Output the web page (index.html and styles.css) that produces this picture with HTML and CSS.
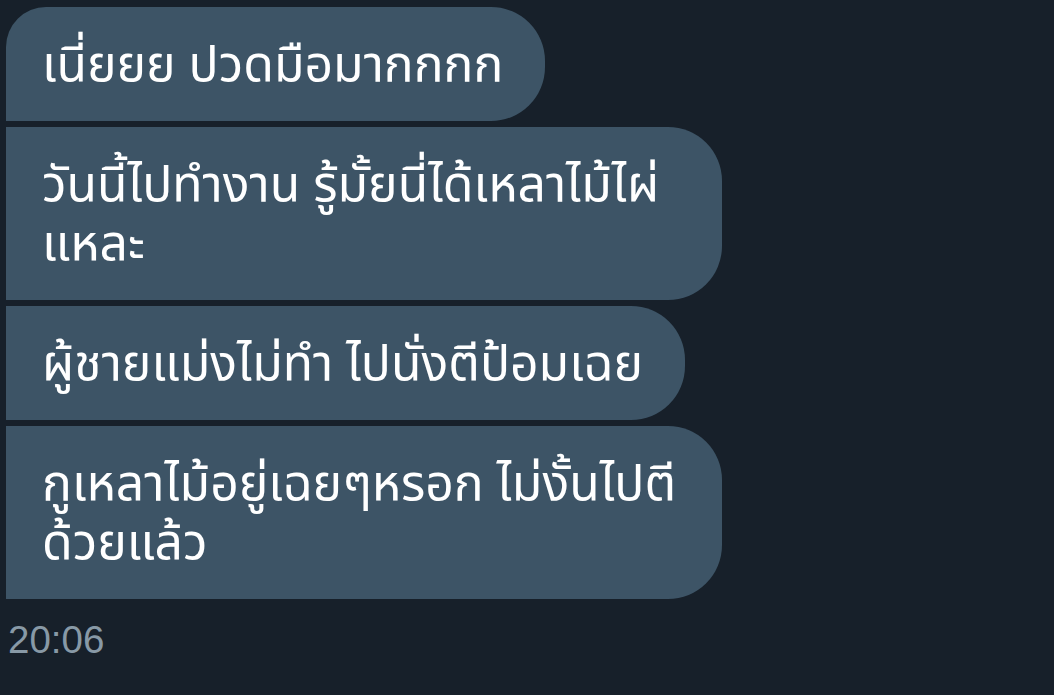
FILE: index.html
```html
<!DOCTYPE html>
<html lang="th">
<head>
<meta charset="utf-8">
<link rel="stylesheet" href="styles.css">
</head>
<body>
<div class="thread">
  <div class="group">
    <div class="bubble first">เนี่ยยย ปวดมือมากกกก</div>
    <div class="bubble">วันนี้ไปทำงาน รู้มั้ยนี่ได้เหลาไม้ไผ่แหละ</div>
    <div class="bubble">ผู้ชายแม่งไม่ทำ ไปนั่งตีป้อมเฉย</div>
    <div class="bubble last">กูเหลาไม้อยู่เฉยๆหรอก ไม่งั้นไปตีด้วยแล้ว</div>
  </div>
  <div class="time">20:06</div>
</div>
</body>
</html>
```
FILE: styles.css
```css
html, body {
  margin: 0;
  padding: 0;
  background: #17202a;
  height: 100%;
}
.thread {
  padding: 7px 0 0 6px;
}
.group {
  display: flex;
  flex-direction: column;
  align-items: flex-start;
  gap: 6px;
}
.bubble {
  box-sizing: border-box;
  max-width: 716px;
  background: #3d5466;
  color: #ffffff;
  font-family: "Noto Sans Thai", "Noto Sans", "DejaVu Sans", sans-serif;
  font-size: 49.8px;
  line-height: 59px;
  padding: 30px 42px 25px 36px;
  border-radius: 0 54px 54px 0;
}
.bubble.first {
  border-top-left-radius: 40px;
}
.time {
  margin-top: 19px;
  margin-left: 2px;
  font-family: "Liberation Sans", Arial, sans-serif;
  font-size: 38.5px;
  color: #8899a6;
}
```
